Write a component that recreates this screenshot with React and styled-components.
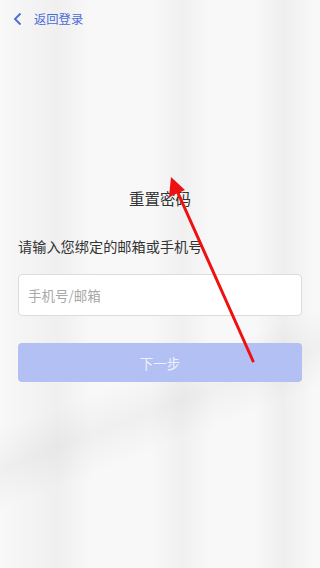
import React from "react";
import styled, { createGlobalStyle } from "styled-components";

const Global = createGlobalStyle`
  html, body { margin: 0; padding: 0; }
  body {
    font-family: "Noto Sans CJK SC", "Noto Sans", sans-serif;
    background: #f6f6f6;
  }
`;

const Page = styled.div`
  position: relative;
  width: 320px;
  height: 568px;
  overflow: hidden;
  background:
    linear-gradient(159deg, transparent 62%, rgba(0,0,0,0.035) 68%, transparent 74%),
    linear-gradient(90deg,
      rgba(0,0,0,0.00) 0px,
      rgba(0,0,0,0.035) 58px,
      rgba(0,0,0,0.00) 92px,
      rgba(0,0,0,0.00) 150px,
      rgba(0,0,0,0.03) 182px,
      rgba(0,0,0,0.00) 212px,
      rgba(0,0,0,0.00) 255px,
      rgba(0,0,0,0.04) 283px,
      rgba(0,0,0,0.00) 315px),
    #f8f8f8;
`;

const TopBar = styled.div`
  display: flex;
  align-items: center;
  height: 37px;
  padding-left: 13px;
  gap: 12px;
  color: #4a6ad6;
  font-size: 12.3px;
`;

const Content = styled.div`
  padding: 0 18px;
  display: flex;
  flex-direction: column;
`;

const Title = styled.h1`
  margin: 150px 0 0;
  text-align: center;
  font-size: 15.5px;
  font-weight: 400;
  color: #333;
  line-height: 22px;
`;

const Label = styled.div`
  margin-top: 27px;
  font-size: 14.2px;
  color: #333;
  line-height: 20px;
`;

const Input = styled.input`
  margin-top: 18px;
  height: 42px;
  box-sizing: border-box;
  border: 1px solid #dcdcdc;
  border-radius: 4px;
  background: #fff;
  padding: 0 9px;
  font-family: inherit;
  font-size: 13.5px;
  outline: none;
  &::placeholder { color: #a8a8a8; }
`;

const Button = styled.button`
  margin-top: 27px;
  height: 39px;
  border: none;
  border-radius: 4px;
  background: #b2c0f4;
  color: #eef1fd;
  font-family: inherit;
  font-size: 13.5px;
`;

const Overlay = styled.svg`
  position: absolute;
  left: 0;
  top: 0;
  pointer-events: none;
`;

export default function App() {
  return (
    <Page>
      <Global />
      <TopBar>
        <svg width="9" height="14" viewBox="0 0 9 14">
          <path d="M7.5 1.5 L2 7 L7.5 12.5" fill="none" stroke="#4a6ad6" strokeWidth="1.8" />
        </svg>
        <span>返回登录</span>
      </TopBar>
      <Content>
        <Title>重置密码</Title>
        <Label>请输入您绑定的邮箱或手机号</Label>
        <Input placeholder="手机号/邮箱" />
        <Button>下一步</Button>
      </Content>
      <Overlay width="320" height="568" viewBox="0 0 320 568">
        <line x1="253" y1="361" x2="178" y2="193" stroke="#ee1111" strokeWidth="3" strokeLinecap="round" />
        <polygon points="171,177 169,197 185,190" fill="#ee1111" />
      </Overlay>
    </Page>
  );
}
